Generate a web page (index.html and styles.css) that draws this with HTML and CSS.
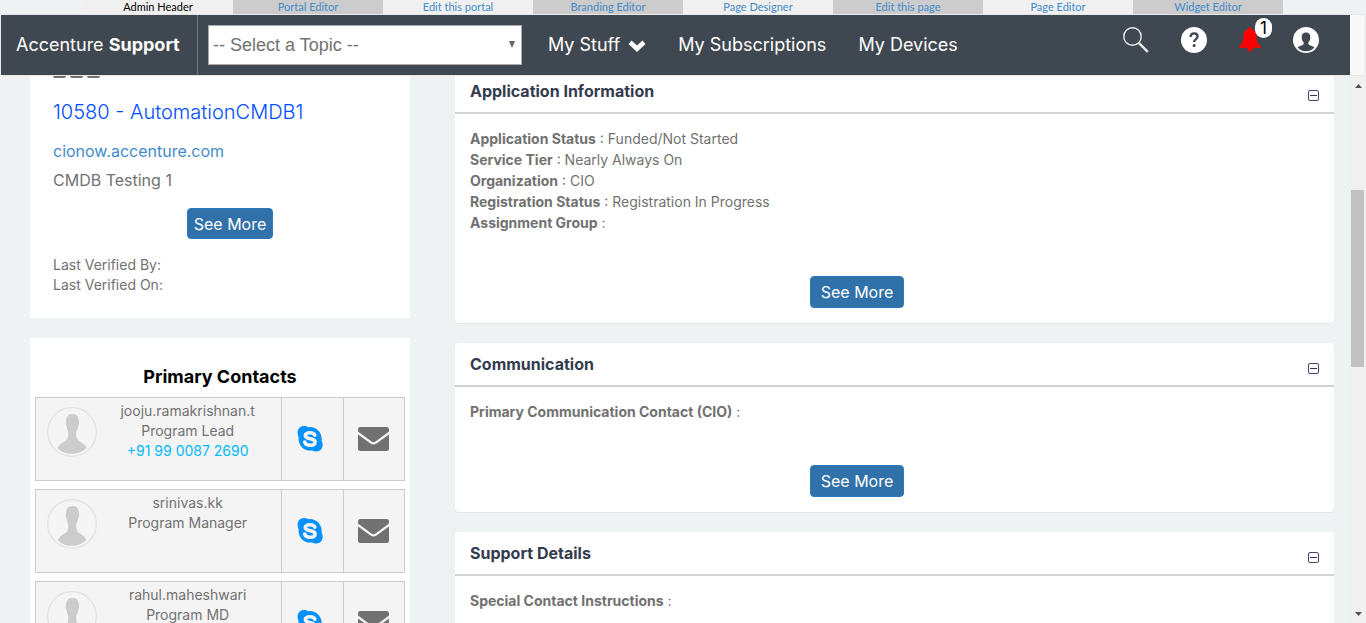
FILE: index.html
```html
<!DOCTYPE html>
<html lang="en">
<head>
<meta charset="utf-8">
<title>Accenture Support</title>
<link rel="stylesheet" href="styles.css">
</head>
<body>
<svg class="defs" aria-hidden="true">
  <symbol id="person" viewBox="0 0 50 50">
    <circle cx="25" cy="25" r="24.3" fill="#f5f5f5" stroke="#dfe2e2" stroke-width="1.2"/>
    <path d="M25.5 7c4.600 0 6.300 3 6.200 7 .8.600.5 4-.6 5.200-.4 2.800-1 4.300-1.900 6 0 3 0 5.500 1.300 7.300 2.500 2.800 6.300 3.500 9 8.200-3.400 3.800-8.400 6-14.500 6s-11.200-2.200-14.300-5.800c2.600-4.800 6.800-5.600 9.300-8.400 1.300-1.800 1.300-4.300 1.300-7.300-.9-1.700-1.400-3.200-1.700-6-1.100-1.200-1.200-4.600-.4-5.200C19 10 20.900 7 25.500 7z" fill="#ccc"/>
  </symbol>
  <symbol id="skype" viewBox="0 0 26 26">
    <path d="M7 0c1.800 0 3 .5 4.200 1.200C19 .2 25.600 6.500 24.600 14.800c2.600 4.500.2 10.700-5.100 10.700-1.700 0-3-.4-4.200-1.100C7.300 25.700.8 19.400 1.600 11-.9 6 1.500 0 7 0z" fill="#0590fb"/>
    <path d="M17.800 9.200C17 7.200 15.200 6.800 13 6.800c-3 0-4.700 1-4.700 2.800 0 4.400 9.800 2 9.800 6.300 0 2.200-2.200 3.300-4.900 3.300-3 0-5-1.200-5.500-3.200" fill="none" stroke="#f4f4f4" stroke-width="3.600" stroke-linecap="round"/>
  </symbol>
  <symbol id="mail" viewBox="0 0 31 24">
    <path d="M2.500 0h26A2.500 2.500 0 0 1 31 2.500V4.500L17.500 14.500Q15.500 16 13.500 14.500L0 4.500V2.500A2.500 2.500 0 0 1 2.500 0z" fill="#717171"/>
    <path d="M0 7.500l12.500 9q3 2.200 6 0L31 7.500v14a2.500 2.500 0 0 1-2.500 2.500h-26A2.500 2.500 0 0 1 0 21.500z" fill="#717171"/>
  </symbol>
  <symbol id="minus" viewBox="0 0 11 11">
    <rect x=".5" y=".5" width="10" height="10" rx="1.500" fill="none" stroke="#5b3a72"/>
    <path d="M2 5.500h7" stroke="#33364f"/>
  </symbol>
</svg>

<nav class="admin" aria-label="Admin">
  <span class="tab tab-current">Admin Header</span>
  <a class="tab" href="#">Portal Editor</a>
  <a class="tab" href="#">Edit this portal</a>
  <a class="tab" href="#">Branding Editor</a>
  <a class="tab" href="#">Page Designer</a>
  <a class="tab" href="#">Edit this page</a>
  <a class="tab" href="#">Page Editor</a>
  <a class="tab" href="#">Widget Editor</a>
</nav>

<header class="navbar">
  <div class="bar">
    <a class="brand" href="#">Accenture <b>Support</b></a>
    <div class="topic">
      <select class="topic-select" aria-label="Topic"><option>-- Select a Topic --</option></select>
      <svg class="topic-arrow" width="6" height="7" viewBox="0 0 6 7"><path d="M0 0h6L3 7z" fill="#666"/></svg>
    </div>
    <nav class="links" aria-label="Main">
      <a class="link" href="#">My Stuff <svg width="18" height="13" viewBox="0 0 18 13"><path d="M3.500 1.500L9 6.500l5.500-5L17.500 5 9 13 .5 5z" fill="#fff"/></svg></a>
      <a class="link" href="#">My Subscriptions</a>
      <a class="link" href="#">My Devices</a>
    </nav>
    <div class="tools">
      <button class="tool" type="button" aria-label="Search"><svg width="26" height="26" viewBox="0 0 26 26"><circle cx="9.500" cy="9.500" r="8.700" fill="none" stroke="#eee" stroke-width="1.400"/><path d="M15.800 15.800l9 9" stroke="#e4e4e0" stroke-width="2.600"/></svg></button>
      <button class="tool" type="button" aria-label="Help"><svg width="26" height="26" viewBox="0 0 26 26"><circle cx="13" cy="13" r="13" fill="#fff"/><path d="M9.500 10c.1-2.400 1.500-3.600 3.600-3.600 2 0 3.500 1.200 3.500 3 0 2.600-3.500 2.700-3.500 5.600" fill="none" stroke="#3f4850" stroke-width="2.300"/><circle cx="13.100" cy="18.500" r="1.500" fill="#3f4850"/></svg></button>
      <button class="tool" type="button" aria-label="Notifications"><svg width="22" height="26" viewBox="0 0 22 26"><path d="M11 0c1.200 0 1.700.8 1.900 1.900 3.300 1.200 4.600 4.200 4.800 8.100.3 5.500 1.300 7.600 4.200 9.200v1.600h-8.400a2.600 2.600 0 1 1-5 1.900 3 3 0 0 1 0-1.900H.1v-1.600C3 17.600 4 15.500 4.300 10c.2-3.900 1.500-6.900 4.800-8.100C9.300.8 9.800 0 11 0z" fill="red"/></svg><span class="badge">1</span></button>
      <button class="tool" type="button" aria-label="Profile"><svg width="26" height="26" viewBox="0 0 26 26"><circle cx="13" cy="13" r="13" fill="#fff"/><path d="M13 5.500c3 0 4.400 2 4.300 4.700 0 2.400-.7 4-2 5.300-.2 1.500.3 2.200 1.500 2.700 1.800.6 3.600 1 4.600 2.300-2 2.300-4.800 3.800-8.400 3.800s-6.400-1.500-8.400-3.800c1-1.300 2.800-1.700 4.600-2.300 1.200-.5 1.700-1.200 1.500-2.700-1.300-1.300-2-2.900-2-5.300C8.600 7.500 10 5.500 13 5.500z" fill="#3f4850"/></svg></button>
    </div>
  </div>
</header>

<div class="viewport">
  <main class="page">
    <div class="column">
      <section class="card summary">
        <div class="dashes"><i></i><i></i><i></i></div>
        <h1 class="app-name">10580 - AutomationCMDB1</h1>
        <a class="site" href="#">cionow.accenture.com</a>
        <p class="about">CMDB Testing 1</p>
        <div class="summary-actions"><button class="more more-small" type="button">See More</button></div>
        <p class="verified">Last Verified By:<br>Last Verified On:</p>
      </section>
      <section class="card contacts">
        <h2 class="contacts-title">Primary Contacts</h2>
        <article class="contact">
          <div class="who"><svg class="avatar"><use href="#person"/></svg><div class="details">jooju.ramakrishnan.t<br>Program Lead<br><a class="phone" href="#">+91 99 0087 2690</a></div></div>
          <a class="action action-skype" href="#" aria-label="Skype"><svg width="26" height="26"><use href="#skype"/></svg></a>
          <a class="action" href="#" aria-label="Mail"><svg width="31" height="24"><use href="#mail"/></svg></a>
        </article>
        <article class="contact">
          <div class="who"><svg class="avatar"><use href="#person"/></svg><div class="details">srinivas.kk<br>Program Manager</div></div>
          <a class="action action-skype" href="#" aria-label="Skype"><svg width="26" height="26"><use href="#skype"/></svg></a>
          <a class="action" href="#" aria-label="Mail"><svg width="31" height="24"><use href="#mail"/></svg></a>
        </article>
        <article class="contact">
          <div class="who"><svg class="avatar"><use href="#person"/></svg><div class="details">rahul.maheshwari<br>Program MD</div></div>
          <a class="action action-skype" href="#" aria-label="Skype"><svg width="26" height="26"><use href="#skype"/></svg></a>
          <a class="action" href="#" aria-label="Mail"><svg width="31" height="24"><use href="#mail"/></svg></a>
        </article>
      </section>
    </div>
    <div class="column">
      <section class="card panel panel-first">
        <div class="panel-head"><h2 class="panel-title">Application Information</h2><button class="fold" type="button" aria-label="Collapse"><svg width="11" height="11"><use href="#minus"/></svg></button></div>
        <div class="panel-body">
          <p class="facts"><b>Application Status</b> : Funded/Not Started<br><b>Service Tier</b> : Nearly Always On<br><b>Organization</b> : CIO<br><b>Registration Status</b> : Registration In Progress<br><b>Assignment Group</b> :</p>
          <div class="panel-actions"><button class="more" type="button">See More</button></div>
        </div>
      </section>
      <section class="card panel">
        <div class="panel-head"><h2 class="panel-title">Communication</h2><button class="fold" type="button" aria-label="Collapse"><svg width="11" height="11"><use href="#minus"/></svg></button></div>
        <div class="panel-body">
          <p class="facts"><b>Primary Communication Contact (CIO)</b> :</p>
          <div class="panel-actions"><button class="more" type="button">See More</button></div>
        </div>
      </section>
      <section class="card panel">
        <div class="panel-head"><h2 class="panel-title">Support Details</h2><button class="fold" type="button" aria-label="Collapse"><svg width="11" height="11"><use href="#minus"/></svg></button></div>
        <div class="panel-body">
          <p class="facts"><b>Special Contact Instructions</b> :</p>
        </div>
      </section>
    </div>
  </main>
  <div class="scrollbar" aria-hidden="true">
    <svg width="7" height="4" viewBox="0 0 7 4"><path d="M0 4h7L3.500 0z" fill="#505050"/></svg>
    <div class="track"><div class="thumb"></div></div>
    <svg width="7" height="4" viewBox="0 0 7 4"><path d="M0 0h7L3.500 4z" fill="#505050"/></svg>
  </div>
</div>
</body>
</html>
```
FILE: styles.css
```css
* { box-sizing: border-box; }
body {
  margin: 0;
  height: 100vh;
  display: flex;
  flex-direction: column;
  overflow: hidden;
  background: #eef2f3;
  color: #717171;
  font: 14px/20px Inter, "Liberation Sans", sans-serif;
}
h1, h2, p { margin: 0; }
a { text-decoration: none; }
button { font: inherit; border: 0; padding: 0; background: none; cursor: pointer; }
svg { display: block; flex: none; }
.defs { position: absolute; width: 0; height: 0; }

.admin {
  display: flex;
  justify-content: center;
  flex: none;
  height: 14px;
  font: 11px/14px Lato, sans-serif;
}
.tab {
  width: 150px;
  background: #f0f0f0;
  color: #428bca;
  text-align: center;
}
.tab:nth-child(even) { background: #ccc; }
.tab-current { color: #000; }

.navbar {
  flex: none;
  border: 1px solid #e7e7e7;
  border-radius: 4px;
  background: #f8f8f8;
}
.bar {
  display: flex;
  align-items: center;
  height: 60px;
  margin-right: 15px;
  background: #3f4850;
  color: #fff;
  font-size: 18px;
}
.brand {
  align-self: stretch;
  width: 197px;
  padding-left: 15px;
  border-right: 1px solid #73797e;
  color: #fff;
  line-height: 60px;
  white-space: nowrap;
}
.brand b { font-weight: 700; }
.topic { position: relative; margin-left: 10px; }
.topic-select {
  display: block;
  width: 314px;
  height: 40px;
  padding: 0 4px;
  appearance: none;
  border: 1px solid #a9a9a9;
  border-radius: 0;
  background: #fff;
  color: #717171;
  font: 18px "Liberation Sans", sans-serif;
}
.topic-arrow { position: absolute; top: 16px; right: 7px; pointer-events: none; }
.links { display: flex; gap: 32px; margin-left: 26px; }
.link { display: flex; align-items: center; gap: 8px; color: #fff; white-space: nowrap; }
.tools {
  display: flex;
  align-self: flex-start;
  gap: 32px;
  margin: 12px 31px 0 auto;
}
.tool { position: relative; }
.badge {
  position: absolute;
  top: -9px;
  right: -11px;
  width: 17px;
  border-radius: 9px;
  background: #fff;
  color: #000;
  font-size: 17px;
  line-height: 20px;
}

.viewport { display: flex; flex: 1; min-height: 0; }
.page {
  flex: 1;
  display: grid;
  grid-template-columns: 380fr 879fr;
  align-items: start;
  gap: 45px;
  padding: 0 16px 0 30px;
  overflow: hidden;
}
.column { display: flex; flex-direction: column; gap: 20px; min-width: 0; }
.card { background: #fff; }

.summary { padding: 0 23px 23px; }
.dashes { display: flex; gap: 4px; height: 2px; }
.dashes i { width: 13px; background: #717171; border-radius: 0 0 4px 4px; }
.app-name {
  margin-top: 20px;
  color: #004dff;
  font-size: 20px;
  font-weight: 300;
  line-height: 28px;
}
.site { display: block; margin-top: 15px; color: #428bca; font-size: 16px; }
.about { margin-top: 9px; font-size: 16px; }
.more {
  padding: 5px 10px;
  border: 1px solid #2e79b9;
  border-radius: 4px;
  background: #3071a9;
  color: #fff;
  font-size: 16px;
}
.more-small { padding: 5px 6px 4px; }
.summary-actions { display: flex; justify-content: center; margin-top: 18px; padding-left: 20px; }
.verified { margin-top: 16px; }

.contacts { display: flex; flex-direction: column; gap: 8px; padding: 27px 5px 5px; }
.contacts-title {
  color: #000;
  font-size: 18px;
  font-weight: 700;
  line-height: 24px;
  text-align: center;
}
.contact {
  display: grid;
  grid-template-columns: 4fr 1fr 1fr;
  height: 84px;
  border: 1px solid #ccc;
  background: #f4f4f4;
}
.who { display: flex; padding: 3px 11px; }
.avatar { width: 50px; height: 50px; margin-top: 6px; }
.details { flex: 1; padding-left: 8px; text-align: center; }
.phone { color: #00baff; }
.action { display: grid; place-items: center; border-left: 1px solid #ccc; }
.action-skype { padding-right: 4px; }

.panel { border-radius: 4px; box-shadow: 0 1px 1px rgba(0, 0, 0, .05); }
.panel-head {
  display: flex;
  justify-content: space-between;
  align-items: flex-start;
  height: 44px;
  padding: 10px 15px 0;
  border-bottom: 2px solid #d2d2d2;
}
.panel-title { color: #333b4e; font-size: 16px; font-weight: 700; line-height: 22px; }
.fold { margin-top: 10px; }
.panel-body { padding: 14px 15px 15px; }
.panel-first { border-radius: 0 0 4px 4px; }
.panel-first .panel-head { height: 38px; padding-top: 4px; }
.facts { line-height: 21px; }
.facts b { font-weight: 700; }
.panel-actions { display: flex; justify-content: center; margin-top: 43px; padding-right: 75px; }

.scrollbar {
  display: flex;
  flex-direction: column;
  align-items: center;
  width: 16px;
  padding: 8px 0 7px;
  background: #f0f0f0;
}
.track { flex: 1; align-self: stretch; padding: 102px 2px 0 1px; }
.thumb { height: 177px; background: #c1c1c1; }
```
